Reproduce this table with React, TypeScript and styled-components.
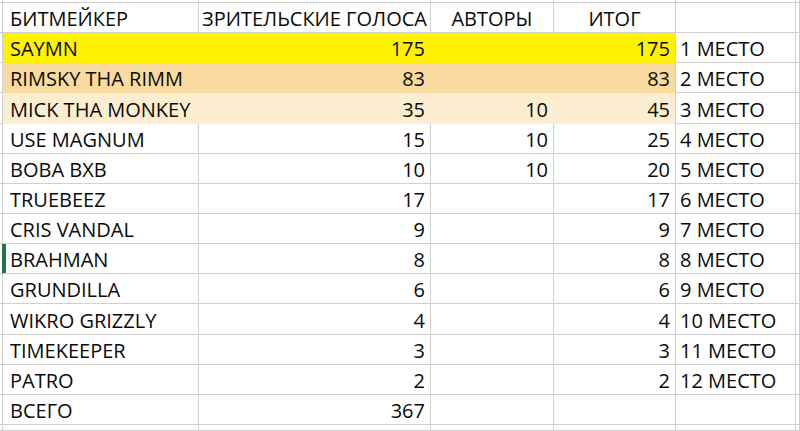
import React from 'react'
import styled, { createGlobalStyle } from 'styled-components'

const GlobalStyle = createGlobalStyle`
  html, body {
    margin: 0;
    padding: 0;
    background: #ffffff;
  }
  body {
    font-family: "Open Sans", "Noto Sans", sans-serif;
    color: #0a0a0a;
    overflow: hidden;
  }
`

const gridLine = '#d0d0d0'

const Sheet = styled.div`
  display: grid;
  grid-template-columns: 3px 196px 232px 123px 122px 120px 1fr;
  grid-template-rows: 3px repeat(14, 30.15px) 1fr;
  width: 800px;
  height: 431px;
`

type Align = 'left' | 'right' | 'center'

const Cell = styled.div<{ $align?: Align; $fill?: string; $edge?: boolean; $active?: boolean }>`
  display: flex;
  align-items: flex-end;
  justify-content: ${p => (p.$align === 'right' ? 'flex-end' : p.$align === 'center' ? 'center' : 'flex-start')};
  padding: 0 ${p => (p.$align === 'right' ? '5px' : '0')} 2px ${p => (p.$align === 'left' ? '7px' : '0')};
  background: ${p => p.$fill || '#ffffff'};
  border-right: 1px solid ${p => (p.$fill && !p.$edge ? p.$fill : gridLine)};
  border-bottom: 1px solid ${p => p.$fill || gridLine};
  box-shadow: ${p => (p.$active ? 'inset 3px 0 0 #217346' : 'none')};
  font-size: 20px;
  line-height: 22px;
  white-space: nowrap;
  overflow: hidden;
  box-sizing: border-box;
`

const Place = styled(Cell)`
  padding-left: 4px;
`

const Gutter = styled.div<{ $active?: boolean }>`
  border-right: 1px solid ${p => (p.$active ? '#217346' : gridLine)};
  border-bottom: 1px solid ${gridLine};
  box-sizing: border-box;
`

interface Row {
  name: string
  votes: number | ''
  authors: number | ''
  total: number | ''
  place: string
  fill?: string
  active?: boolean
}

const rows: Row[] = [
  { name: 'SAYMN', votes: 175, authors: '', total: 175, place: '1 МЕСТО', fill: '#fff200' },
  { name: 'RIMSKY THA RIMM', votes: 83, authors: '', total: 83, place: '2 МЕСТО', fill: '#f9da9f' },
  { name: 'MICK THA MONKEY', votes: 35, authors: 10, total: 45, place: '3 МЕСТО', fill: '#fdeed2' },
  { name: 'USE MAGNUM', votes: 15, authors: 10, total: 25, place: '4 МЕСТО' },
  { name: 'BOBA BXB', votes: 10, authors: 10, total: 20, place: '5 МЕСТО' },
  { name: 'TRUEBEEZ', votes: 17, authors: '', total: 17, place: '6 МЕСТО' },
  { name: 'CRIS VANDAL', votes: 9, authors: '', total: 9, place: '7 МЕСТО' },
  { name: 'BRAHMAN', votes: 8, authors: '', total: 8, place: '8 МЕСТО', active: true },
  { name: 'GRUNDILLA', votes: 6, authors: '', total: 6, place: '9 МЕСТО' },
  { name: 'WIKRO GRIZZLY', votes: 4, authors: '', total: 4, place: '10 МЕСТО' },
  { name: 'TIMEKEEPER', votes: 3, authors: '', total: 3, place: '11 МЕСТО' },
  { name: 'PATRO', votes: 2, authors: '', total: 2, place: '12 МЕСТО' },
  { name: 'ВСЕГО', votes: 367, authors: '', total: '', place: '' },
]

// empty strip of the spreadsheet above the header and below the last row
const EmptyRow: React.FC = () => (
  <>
    <Gutter />
    <Cell />
    <Cell />
    <Cell />
    <Cell />
    <Cell />
    <Gutter />
  </>
)

const App: React.FC = () => {
  return (
    <>
      <GlobalStyle />
      <Sheet>
        <EmptyRow />

        <Gutter />
        <Cell $align="left">БИТМЕЙКЕР</Cell>
        <Cell $align="center">ЗРИТЕЛЬСКИЕ ГОЛОСА</Cell>
        <Cell $align="center">АВТОРЫ</Cell>
        <Cell $align="center">ИТОГ</Cell>
        <Cell />
        <Gutter />

        {rows.map(r => (
          <React.Fragment key={r.name}>
            <Gutter $active={r.active} />
            <Cell $align="left" $fill={r.fill} $active={r.active}>{r.name}</Cell>
            <Cell $align="right" $fill={r.fill}>{r.votes}</Cell>
            <Cell $align="right" $fill={r.fill}>{r.authors}</Cell>
            <Cell $align="right" $fill={r.fill} $edge>{r.total}</Cell>
            <Place $align="left">{r.place}</Place>
            <Gutter />
          </React.Fragment>
        ))}

        <EmptyRow />
      </Sheet>
    </>
  )
}

export default App
